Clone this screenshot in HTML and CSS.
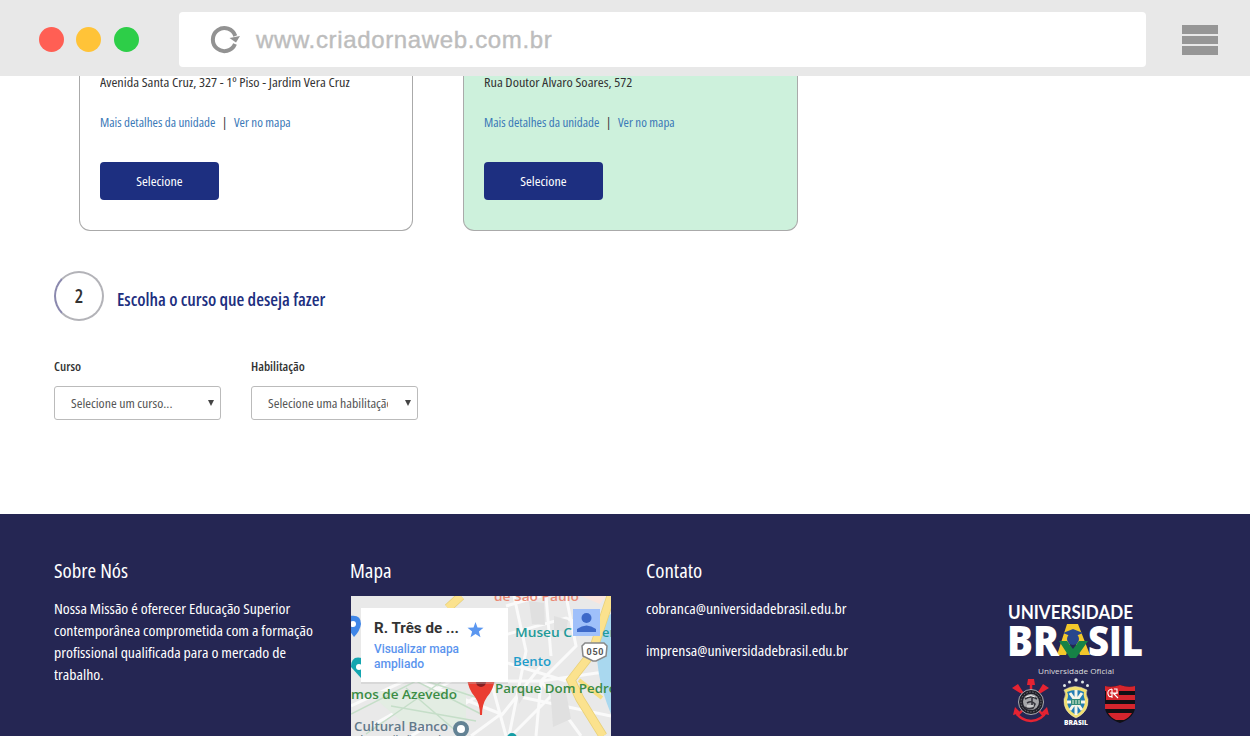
FILE: index.html
```
<!DOCTYPE html>
<html lang="pt-BR">
<head>
<meta charset="utf-8">
<title>Universidade Brasil</title>
<link rel="stylesheet" href="styles.css">
</head>
<body>
<header class="browser">
  <div class="lights"><i class="red"></i><i class="yellow"></i><i class="green"></i></div>
  <div class="url">
    <svg class="reload" width="30" height="28" viewBox="0 0 30 28"><path d="M25 18A11.500 11.500 0 1 1 25.300 10" fill="none" stroke="#929292" stroke-width="4"/><path d="M19.500 12L30 10L26 16.500Z" fill="#929292"/></svg>
    <span>www.criadornaweb.com.br</span>
  </div>
  <div class="menu"><i></i><i></i><i></i></div>
</header>
<main>
  <section class="cards">
    <article class="card">
      <p class="address"><span class="t">Avenida Santa Cruz, 327 - 1º Piso - Jardim Vera Cruz</span></p>
      <p class="links"><a>Mais detalhes da unidade</a><span class="bar">|</span><a>Ver no mapa</a></p>
      <button class="select-btn"><span class="t">Selecione</span></button>
    </article>
    <article class="card chosen">
      <p class="address"><span class="t">Rua Doutor Alvaro Soares, 572</span></p>
      <p class="links"><a>Mais detalhes da unidade</a><span class="bar">|</span><a>Ver no mapa</a></p>
      <button class="select-btn"><span class="t">Selecione</span></button>
    </article>
  </section>
  <section class="step">
    <div class="number">2</div>
    <h2><span class="t">Escolha o curso que deseja fazer</span></h2>
  </section>
  <section class="fields">
    <div class="field"><label>Curso</label><div class="combo"><div class="value"><span class="t">Selecione um curso...</span></div><i></i></div></div>
    <div class="field"><label>Habilitação</label><div class="combo"><div class="value"><span class="t">Selecione uma habilitação</span></div><i></i></div></div>
  </section>
</main>
<footer>
  <section class="about">
    <h3><span class="t">Sobre Nós</span></h3>
    <p><span class="t">Nossa Missão é oferecer Educação Superior</span><span class="t">contemporânea comprometida com a formação</span><span class="t">profissional qualificada para o mercado de</span><span class="t">trabalho.</span></p>
  </section>
  <section class="map-col">
    <h3><span class="t">Mapa</span></h3>
    <svg class="map" width="260" height="140" viewBox="0 0 260 140">
      <rect width="260" height="140" fill="#e9e9e9"/>
      <g fill="none" stroke="#fafafa" stroke-width="3">
        <path d="M155 10L190 0M150 40L215 22L260 40M163 0L175 55L158 140M195 0L200 60M150 65L215 85M165 100L260 120M215 0L225 50L190 85L230 140M190 70L150 120M190 85H145M190 85L260 75M190 85L185 140M0 110L60 82L150 118L120 140M20 130L100 85M60 140L130 98M140 85L155 140M210 90L160 140"/>
      </g>
      <path d="M178 5l15 2 1 22-13-1zM203 20l14 4-2 12-12-2zM199 90l16 6 5 27-18 8zM165 90l13 3-10 15z" fill="#e0e0e0"/>
      <path d="M15 95h100v34H55z" fill="#e3ede3"/>
      <path d="M0 118L65 85L130 118M15 138L90 86M40 110L125 125M55 92L105 135M75 85L130 103" fill="none" stroke="#c5dec8" stroke-width="1.5"/>
      <path d="M242 28L260 18V118Q242 75 247 40z" fill="#a9d8ef"/>
      <path d="M97 12L110 0M260 0L241 57L220 84L229 103L252 140" fill="none" stroke="#e8d078" stroke-width="9"/>
      <path d="M97 12L110 0M260 0L241 57L220 84L229 103L252 140" fill="none" stroke="#fbe28e" stroke-width="7.500"/>
      <path d="M228 84l23 18" stroke="#f6de80" stroke-width="4"/>
      <path d="M230 0h25l-6 8z" fill="#fbe5dc"/>
      <g class="map-text">
        <text x="143" y="5" textLength="85" lengthAdjust="spacingAndGlyphs" fill="#ea8a76">de São Paulo</text>
        <text x="164" y="41" textLength="57" lengthAdjust="spacingAndGlyphs" fill="#239a99">Museu C</text><text x="251" y="41" fill="#239a99">er</text>
        <text x="162" y="70" textLength="38" lengthAdjust="spacingAndGlyphs" fill="#1e9dcb">Bento</text>
        <text x="0" y="103" textLength="106" lengthAdjust="spacingAndGlyphs" fill="#3b8c45">mos de Azevedo</text>
        <text x="144" y="97" textLength="122" lengthAdjust="spacingAndGlyphs" fill="#3b8c45">Parque Dom Pedro</text>
        <text x="3" y="135" textLength="94" lengthAdjust="spacingAndGlyphs" fill="#62798a">Cultural Banco</text>
        <text x="6" y="149" textLength="90" lengthAdjust="spacingAndGlyphs" fill="#62798a">do Brasil São Paulo</text>
      </g>
      <path d="M-1 20Q10 18 10 28Q9 35 3 41L-2 34" fill="#3f86e8"/><circle cx="2" cy="28" r="3" fill="#fff"/>
      <path d="M11 62Q0 59 0 71L10 82z" fill="#13a5b0"/><circle cx="8" cy="71" r="3" fill="#fff"/>
      <circle cx="110" cy="133" r="6" fill="#fff" stroke="#638294" stroke-width="4"/>
      <circle cx="161" cy="142" r="5" fill="#149da5"/>
      <path d="M116 82H144Q143 93 136 101Q131 108 131 119H129Q129 108 124 101Q117 93 116 82Z" fill="#ea3d31"/><circle cx="130" cy="86" r="5" fill="#851f22"/>
      <rect x="10" y="14" width="147" height="74" fill="#bbb" opacity=".35"/><rect x="10" y="12" width="147" height="74" fill="#fff"/>
      <text x="23" y="37" textLength="85" lengthAdjust="spacingAndGlyphs" class="map-title">R. Três de ...</text>
      <text x="23" y="57" textLength="85" lengthAdjust="spacingAndGlyphs" class="map-link">Visualizar mapa</text>
      <text x="23" y="72" textLength="50" lengthAdjust="spacingAndGlyphs" class="map-link">ampliado</text>
      <path d="M124.500 26l2 5.400 6 .4-4.600 3.800 1.600 5.700-5-3.200-5 3.200 1.600-5.700-4.600-3.800 6-.4z" fill="#5b97f0"/>
      <rect x="222" y="13" width="27" height="27" fill="#9fc0fa"/><circle cx="235.500" cy="22" r="5" fill="#3d69c9"/><path d="M226 36V33Q235.500 26 245 33V36z" fill="#3d69c9"/>
      <path d="M234 47h19l3 3-1 10-10 5h-3l-10-5-1-10z" fill="#fff" stroke="#888" stroke-width="1.500"/><text x="235.500" y="59" textLength="17" class="shield">050</text>
    </svg>
  </section>
  <section class="contact">
    <h3><span class="t">Contato</span></h3>
    <p><span class="t">cobranca@universidadebrasil.edu.br</span></p>
    <p><span class="t">imprensa@universidadebrasil.edu.br</span></p>
  </section>
  <svg class="brand" width="150" height="141" viewBox="0 0 150 141">
    <g class="brand-text">
      <text x="8" y="24" textLength="125" lengthAdjust="spacingAndGlyphs" class="uni">UNIVERSIDADE</text>
      <path d="M57 60L67 29H78L90 60H80L73 41L66 60Z" fill="#f2c72b"/>
      <text x="7" y="60.500" textLength="52" lengthAdjust="spacingAndGlyphs" class="bra">BR</text>
      <text x="88" y="60.500" textLength="55" lengthAdjust="spacingAndGlyphs" class="bra">SIL</text>
      <circle cx="73" cy="44" r="6" fill="#28468c"/><path d="M63 38l10-4 10 4-10 4z" fill="#28468c"/>
      <path d="M59 46L67 46L73 54L79 46H88L76 63H70Z" fill="#168246"/>
      <text x="38" y="79" textLength="76" lengthAdjust="spacingAndGlyphs" class="official">Universidade Oficial</text>
      <text x="64" y="129.500" textLength="24" lengthAdjust="spacingAndGlyphs" class="cbf">BRASIL</text>
    </g>
    <g fill="none" stroke="#e52332" stroke-width="2.500"><path d="M16 91L44 121M45 91L17 121M16 117Q20 125 31 126Q42 125 46 117M31 85V97"/></g>
    <path d="M28 84h6l1 6h-8zM13 120l2-8 6 6zM49 120l-2-8-6 6zM12 93l6-4 5 8-3 1zM49 93l-6-4-5 8 3 1z" fill="#e52332"/>
    <circle cx="31" cy="107" r="12.500" fill="#202029" stroke="#aaaab0"/><circle cx="31" cy="107" r="10" fill="none" stroke="#76767c" stroke-dasharray="1.500 1.500"/><circle cx="31" cy="107" r="8" fill="#a4a5a8"/><path d="M25 104q6-4 12 0M27 108q5-3 8 1l-2 4q-5 2-8-1M32 102v8" fill="none" stroke="#34343b" stroke-width="1.600"/><path d="M26 102q5-3 9 0M27 111h7" fill="none" stroke="#eee"/>
    <path d="M64 95Q75 88 87 95Q85 99 88 104Q89 117 76 123Q63 117 64 104Q67 99 64 95Z" fill="#f2df70" stroke="#e9e8c8" stroke-width=".5"/>
    <path d="M67 97Q76 93 84 97Q83 100 85 105Q85 115 76 120Q67 115 67 105Q69 100 67 97Z" fill="#237db5"/><path d="M76 95V120M67 107H85M70 98L82 115M82 98L70 115" stroke="#f5f5e9" stroke-width="3"/><path d="M71 104h10v6H71z" fill="#338c78"/><path d="M73 105v4M76 105v4M79 105v4" stroke="#e8f1da"/>
    <g fill="#e1e8e9"><circle cx="64.500" cy="90.500" r="1.500"/><circle cx="69.500" cy="87" r="1.500"/><circle cx="76" cy="85" r="1.700"/><circle cx="82.500" cy="87" r="1.500"/><circle cx="87.500" cy="90.500" r="1.500"/></g>
    <path d="M105 91Q112 93 120 90Q128 93 135 91V110Q136 122 120 128Q104 122 105 110Z" fill="#111015"/>
    <path d="M105 91Q112 93 120 90Q128 93 135 91V96H105ZM119 100H135V105H119ZM105 109H135V114H105ZM108 118H132Q129 123 124 125H116Q111 123 108 118Z" fill="#d5252d"/><path d="M106 93H119V105H106Z" fill="#d5252d"/><path d="M112 94Q107 95 108 99Q109 103 112 101M112 94V103M110 98H118M114 94h3v4l-3 1 4 4" stroke="#fff" fill="none" stroke-width="1.100"/>
  </svg>
</footer>
</body>
</html>
```
FILE: styles.css
```
* { box-sizing: border-box; }
body { margin: 0; width: 1250px; height: 736px; overflow: hidden; background: #fff; color: #333; font-family: "Open Sans", "Noto Sans", sans-serif; font-stretch: 75%; display: flex; flex-direction: column; }
p, h2, h3 { margin: 0; }
.t { display: inline-block; white-space: nowrap; transform-origin: left center; }
.browser { height: 76px; flex: none; background: #e8e8e8; display: flex; align-items: flex-start; }
.lights { display: flex; gap: 12.500px; padding: 26.500px 0 0 38.500px; width: 179px; }
.lights i { width: 25px; height: 25px; border-radius: 50%; }
.red { background: #ff5f54; }
.yellow { background: #ffc338; }
.green { background: #2dce48; }
.url { width: 967px; height: 55px; margin-top: 12px; background: #fff; border-radius: 4px; display: flex; align-items: center; padding-left: 31px; gap: 16px; font: 24px "Liberation Sans", sans-serif; letter-spacing: .65px; color: #bdbdbd; -webkit-text-stroke: .4px #bdbdbd; }
.reload { display: block; }
.menu { margin: 25px 0 0 36px; width: 36px; display: flex; flex-direction: column; gap: 2px; }
.menu i { height: 8.500px; background: #969696; }
main { height: 438px; flex: none; }
.cards { display: flex; gap: 50px; padding-left: 79px; }
.card { width: 334px; height: 155px; border: 1px solid #aaa; border-top: 0; border-radius: 0 0 11px 11px; padding-left: 20px; font-size: 13px; }
.chosen { width: 335px; background: #cdf1dc; }
.address { height: 37px; line-height: 12px; }
.address .t { transform: scaleX(1.095); }
.links { height: 49px; line-height: 18px; display: flex; }
.links a { color: #3a78b7; width: 115px; white-space: nowrap; }
.links .bar { width: 19px; text-align: center; }
.select-btn { width: 119px; height: 38px; border: 0; border-radius: 4px; background: #1d2f80; color: #fff; font: inherit; font-stretch: 75%; display: flex; align-items: center; justify-content: center; }
.select-btn .t { transform: scaleX(1.08); transform-origin: center; }
.step { display: flex; padding: 40px 0 0 54px; gap: 13px; height: 90px; }
.number { width: 50px; height: 50px; border: 2px solid #b3b3b8; border-left-color: #8b89ae; border-radius: 50%; display: flex; align-items: center; justify-content: center; font-size: 19px; font-weight: 600; }
h2 { font-size: 17px; line-height: 24px; padding-top: 17px; color: #1d2f80; font-weight: 600; }
h2 .t { transform: scaleX(1.05); }
.fields { display: flex; gap: 30px; padding: 36px 0 0 54px; }
.field { width: 167px; }
label { display: block; font-size: 13px; line-height: 18px; height: 29px; font-weight: 600; }
.combo { height: 34px; border: 1px solid #bbb; border-radius: 3px; display: flex; align-items: center; justify-content: space-between; padding: 0 6px 0 16px; font-size: 13px; color: #555; }
.combo .t { transform: scaleX(1.065); }
.value { width: 120px; overflow: hidden; }
.combo i { border: 3.500px solid transparent; border-top: 6px solid #444; border-bottom: 0; }
footer { height: 222px; flex: none; background: #252653; color: #fff; display: flex; }
footer section { padding-top: 45px; }
.about { width: 350px; padding-left: 54px; }
.map-col { width: 295.500px; }
.contact { width: 354.500px; }
h3 { font-size: 19px; line-height: 24px; font-weight: 500; height: 37px; }
h3 .t { transform: scaleX(1.1); }
footer p { font-size: 14px; line-height: 22px; font-weight: 500; margin-top: 2px; }
footer p .t { transform: scaleX(1.127); }
.about p { display: flex; flex-direction: column; align-items: flex-start; }
.contact p { margin: 2px 0 20px; }
.contact p + p { margin-top: 0; }
.map { display: block; margin-left: 1px; }
.map-text { font: 600 13px "Open Sans", sans-serif; }
.map-title { font: 700 15px Roboto, sans-serif; fill: #333; }
.map-link { font: 500 12px Roboto, sans-serif; fill: #5b94ee; }
.shield { font: 700 9px Roboto, sans-serif; fill: #555; }
.brand { margin-top: 81px; }
.brand-text { fill: #fff; }
.uni { font: 700 18px Lato, sans-serif; }
.bra { font: 800 43px "Open Sans", sans-serif; }
.official { font: 8px "Open Sans", sans-serif; fill: #ddd; }
.cbf { font: 900 7px "Open Sans", sans-serif; }
```
